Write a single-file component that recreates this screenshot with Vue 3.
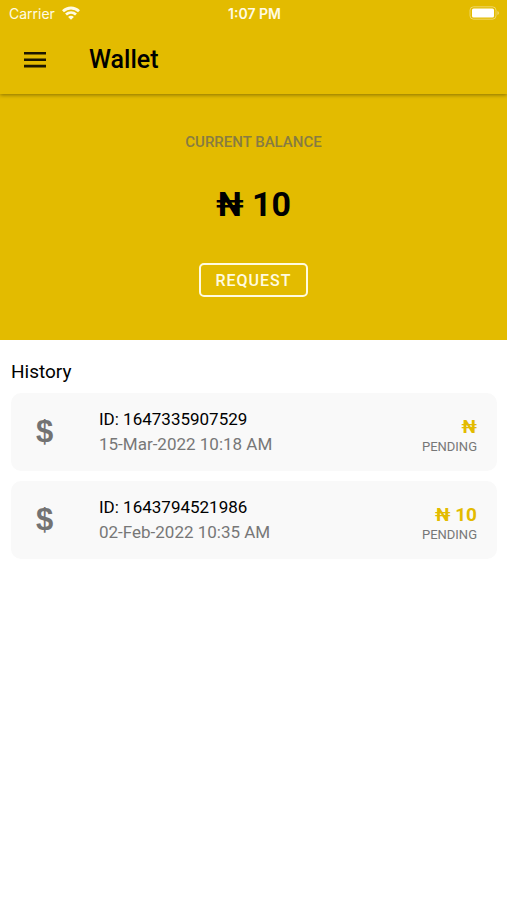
<template>
  <div class="wallet">
    <header class="topbar">
      <div class="status">
        <div class="status__carrier">
          <span>Carrier</span>
          <svg width="18" height="14" viewBox="0 0 18 14" fill="none" stroke="currentColor" stroke-width="2.8">
            <path d="M1 5.2C5.6.9 12.4.9 17 5.2"/>
            <path d="M4 8.5c2.9-2.6 7.1-2.6 10 0"/>
            <path d="M9 13.8 6.1 10.9c1.7-1.4 4.1-1.4 5.8 0z" fill="currentColor" stroke="none"/>
          </svg>
        </div>
        <span class="status__time">1:07 PM</span>
        <div class="status__battery">
          <svg width="31" height="14" viewBox="0 0 31 14">
            <rect x="1" y="0.8" width="26" height="12.4" rx="3.5" fill="none" stroke="#fff" stroke-opacity="0.4"/>
            <rect x="3" y="2.4" width="22" height="9.2" rx="1.6" fill="#fff"/>
            <path d="M28.5 5v4c1.8-.7 1.8-3.3 0-4z" fill="#fff" fill-opacity="0.5"/>
          </svg>
        </div>
      </div>
      <div class="appbar">
        <button class="appbar__menu" type="button" aria-label="Menu">
          <svg width="24" height="16" viewBox="0 0 24 16" fill="currentColor">
            <path d="M1 0h22v2.6H1zM1 6.4h22V9H1zM1 12.8h22v2.6H1z"/>
          </svg>
        </button>
        <h1 class="appbar__title">Wallet</h1>
      </div>
    </header>

    <section class="balance">
      <p class="balance__label">CURRENT BALANCE</p>
      <p class="balance__amount">₦ {{ balance }}</p>
      <button class="balance__request" type="button">REQUEST</button>
    </section>

    <main class="history">
      <h2 class="history__title">History</h2>
      <ul class="history__list">
        <li v-for="item in history" :key="item.id" class="entry">
          <span class="entry__icon">$</span>
          <div class="entry__info">
            <span class="entry__id">ID: {{ item.id }}</span>
            <span class="entry__date">{{ item.date }}</span>
          </div>
          <div class="entry__side">
            <span class="entry__amount">₦ {{ item.amount }}</span>
            <span class="entry__status">{{ item.status }}</span>
          </div>
        </li>
      </ul>
    </main>
  </div>
</template>

<script setup>
import { ref } from 'vue'

const balance = ref(10)

const history = ref([
  { id: '1647335907529', date: '15-Mar-2022 10:18 AM', amount: '', status: 'PENDING' },
  { id: '1643794521986', date: '02-Feb-2022 10:35 AM', amount: '10', status: 'PENDING' }
])
</script>

<style>
body {
  background: #fff;
}
</style>

<style scoped>
.wallet {
  font-family: Roboto, "Liberation Sans", sans-serif;
  color: #000;
}

.topbar {
  position: relative;
  background: #e3bb00;
  box-shadow: 0 1px 4px rgba(0, 0, 0, 0.4);
}

.status {
  display: grid;
  grid-template-columns: 1fr auto 1fr;
  align-items: center;
  height: 26px;
  padding: 0 7px 0 9px;
  color: #fffbe6;
  font-family: Inter, sans-serif;
  font-size: 14px;
}

.status__carrier {
  display: flex;
  align-items: center;
  gap: 7px;
}

.status__time {
  font-weight: 600;
}

.status__battery {
  display: flex;
  justify-content: flex-end;
}

.appbar {
  display: flex;
  align-items: center;
  height: 68px;
  padding: 0 23px;
  box-sizing: border-box;
}

.appbar__menu {
  display: flex;
  padding: 0;
  border: none;
  background: none;
  color: #1c1700;
  cursor: pointer;
}

.appbar__title {
  margin: 0 0 0 42px;
  font-size: 25px;
  font-weight: 500;
  line-height: 28px;
}

.balance {
  display: flex;
  flex-direction: column;
  align-items: center;
  padding: 38px 16px 43px;
  background: #e3bb00;
}

.balance__label {
  margin: 0;
  font-size: 15px;
  font-weight: 500;
  line-height: 20px;
  color: #877b42;
}

.balance__amount {
  margin: 32px 0 39px;
  font-size: 34px;
  font-weight: 700;
  line-height: 40px;
}

.balance__request {
  height: 34px;
  padding: 0 14px;
  border: 2px solid #fffbe0;
  border-radius: 5px;
  background: none;
  color: #fffbe0;
  font-family: inherit;
  font-size: 16px;
  font-weight: 500;
  letter-spacing: 1px;
  cursor: pointer;
}

.history {
  padding: 20px 10px 20px 11px;
}

.history__title {
  margin: 0;
  font-size: 19px;
  font-weight: 400;
  line-height: 24px;
}

.history__list {
  display: flex;
  flex-direction: column;
  gap: 10px;
  margin: 9px 0 0;
  padding: 0;
  list-style: none;
}

.entry {
  display: flex;
  align-items: center;
  padding: 14px 20px 14px 25px;
  border-radius: 10px;
  background: #f9f9f9;
}

.entry__icon {
  width: 63px;
  font-family: "Liberation Sans", sans-serif;
  font-size: 31px;
  font-weight: 700;
  line-height: 32px;
  color: #737373;
}

.entry__info {
  display: flex;
  flex: 1;
  flex-direction: column;
  font-size: 17px;
  line-height: 25px;
}

.entry__date {
  color: #777;
}

.entry__side {
  display: flex;
  flex-direction: column;
  align-items: flex-end;
  padding-top: 9px;
}

.entry__amount {
  font-size: 19px;
  font-weight: 700;
  line-height: 21px;
  color: #e3bb00;
}

.entry__status {
  font-size: 13px;
  line-height: 20px;
  color: #777;
}
</style>
